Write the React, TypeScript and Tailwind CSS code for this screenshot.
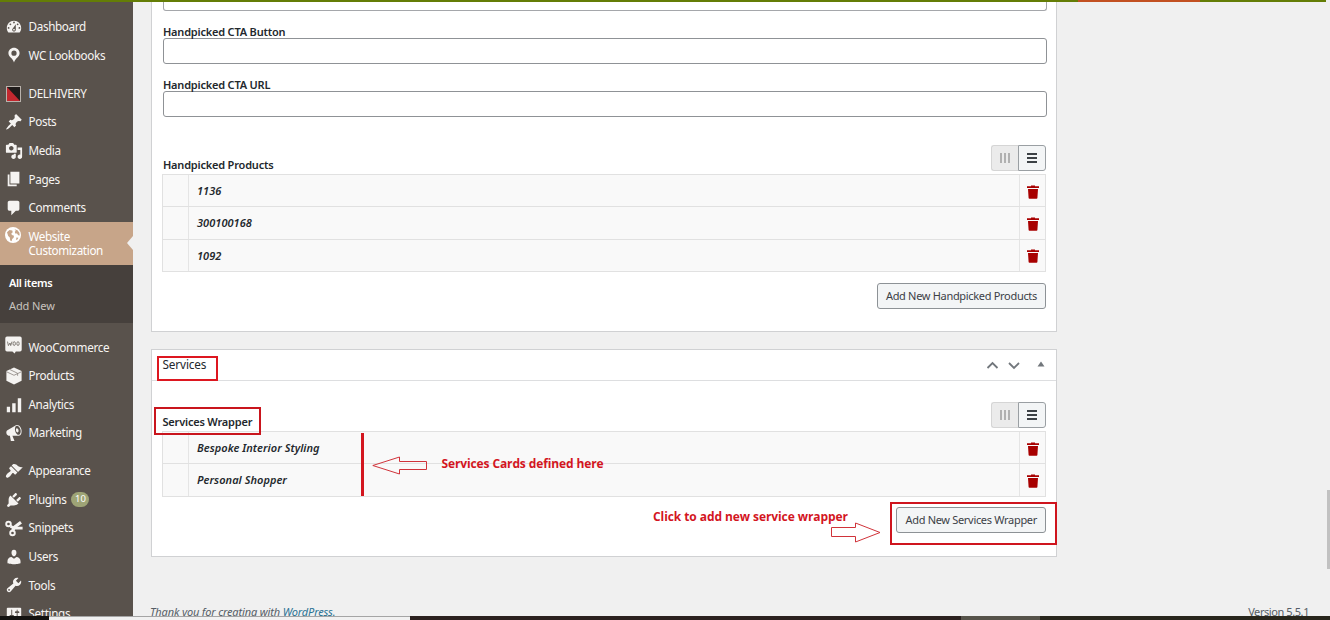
import type { ReactNode } from "react";

const P = {
  dashboard:
    "M3.76 16h12.48c1.1-1.37 1.76-3.11 1.76-5 0-4.42-3.58-8-8-8s-8 3.58-8 8c0 1.89.66 3.63 1.76 5zM10 4c.55 0 1 .45 1 1s-.45 1-1 1-1-.45-1-1 .45-1 1-1zM6 6c.55 0 1 .45 1 1s-.45 1-1 1-1-.45-1-1 .45-1 1-1zm8 0c.55 0 1 .45 1 1s-.45 1-1 1-1-.45-1-1 .45-1 1-1zm-5.37 5.55L12 7v6c0 1.1-.9 2-2 2s-2-.9-2-2c0-.57.24-1.08.63-1.45zM4 10c.55 0 1 .45 1 1s-.45 1-1 1-1-.45-1-1 .45-1 1-1zm12 0c.55 0 1 .45 1 1s-.45 1-1 1-1-.45-1-1 .45-1 1-1zm-5 3c0-.55-.45-1-1-1s-1 .45-1 1 .45 1 1 1 1-.45 1-1z",
  location:
    "M10 2C6.500 2 3.800 4.700 3.800 8c0 2.100 1.300 3.800 2.700 5 1.200 1 2.900 3.300 3.500 5.200.6-1.900 2.300-4.200 3.500-5.200 1.400-1.200 2.700-2.900 2.700-5 0-3.300-2.700-6-6.200-6zm0 3.100a2.900 2.900 0 1 1 0 5.800 2.900 2.900 0 0 1 0-5.800z",
  post: "M10.44 3.02l1.82-1.82 6.36 6.35-1.83 1.82c-1.05-.68-2.48-.57-3.41.36l-.75.75c-.92.93-1.04 2.35-.35 3.41l-1.83 1.82-2.41-2.41-2.8 2.79c-.42.42-3.38 2.71-3.8 2.29s1.86-3.39 2.28-3.81l2.79-2.79L4.1 9.36l1.83-1.82c1.05.69 2.48.57 3.4-.36l.75-.75c.93-.92 1.05-2.35.36-3.41z",
  media:
    "M13 11V4c0-.55-.45-1-1-1h-1.67L9 1H5L3.67 3H2c-.55 0-1 .45-1 1v7c0 .55.45 1 1 1h10c.55 0 1-.45 1-1zM7 4.5c1.38 0 2.5 1.12 2.5 2.5S8.38 9.5 7 9.5 4.5 8.38 4.5 7 5.62 4.5 7 4.5zM14 6h5v10.5c0 1.38-1.12 2.5-2.5 2.5S14 17.88 14 16.5s1.12-2.5 2.5-2.5c.17 0 .34.02.5.05V9h-3V6zm-4 8.05V13h2v3.5c0 1.38-1.12 2.5-2.5 2.5S7 17.88 7 16.5 8.12 14 9.5 14c.17 0 .34.02.5.05z",
  page: "M6 15V2h10v13H6zm-1 1h8v2H3V5h2v11z",
  comments: "M5 2h9c1.1 0 2 .9 2 2v7c0 1.1-.9 2-2 2h-2l-5 5v-5H5c-1.1 0-2-.9-2-2V4c0-1.1.9-2 2-2z",
  analytics: "M2 12h3.6v6H2zM8 8h3.8v10H8zM14.2 2.5H18V18h-3.8z",
  megaphone:
    "M18.15 5.94c.46 1.62.38 3.22-.02 4.48-.42 1.28-1.26 2.18-2.3 2.48-.16.06-.26.06-.4.06-.06.02-.12.02-.18.02-.06.02-.14.02-.22.02h-6.8l2.22 5.5c.02.14-.06.26-.14.34-.08.1-.24.16-.34.16H6.95c-.1 0-.26-.06-.34-.16-.08-.08-.16-.2-.14-.34l-1-5.5H4.25l-.02-.02c-.5.06-1.08-.18-1.54-.62s-.88-1.08-1.06-1.88c-.24-.8-.2-1.56-.02-2.2.18-.62.58-1.08 1.06-1.3l.02-.02 9-5.4c.1-.06.18-.1.24-.16.06-.04.14-.08.24-.12.16-.08.28-.12.5-.18 1.04-.3 2.24.1 3.22.98s1.84 2.24 2.26 3.86zm-2.58 5.98h-.02c.4-.1.74-.34 1.04-.7.58-.7.86-1.76.86-3.04 0-.64-.1-1.3-.28-1.98-.34-1.36-1.02-2.5-1.78-3.24s-1.68-1.1-2.46-.88c-.82.22-1.4.96-1.7 2-.32 1.04-.28 2.36.06 3.72.38 1.36 1 2.5 1.8 3.24.78.74 1.62 1.1 2.48.88zm-2.54-7.08c.22-.04.42-.02.62.04.38.16.76.48 1.02 1s.42 1.2.42 1.78c0 .3-.04.56-.12.8-.18.48-.44.84-.86.94-.34.1-.8-.06-1.14-.4s-.64-.86-.78-1.5c-.18-.62-.12-1.24.02-1.72s.48-.84.82-.94z",
  appearance:
    "M14.48 11.06L7.41 3.99l1.5-1.5c.5-.56 2.3-.47 3.51.32 1.21.8 1.43 1.28 2.91 2.1 1.18.64 2.45 1.26 4.45.85zm-.71.71L6.7 4.7 4.93 6.47c-.39.39-.39 1.02 0 1.41l1.06 1.06c.39.39.39 1.03 0 1.42-.6.6-1.43 1.11-2.21 1.69-.35.26-.7.53-1.01.84C1.43 14.23.4 16.08 1.4 17.07c.99 1 2.84-.03 4.18-1.36.31-.31.58-.66.85-1.02.57-.78 1.08-1.61 1.69-2.21.39-.39 1.02-.39 1.41 0l1.06 1.06c.39.39 1.02.39 1.41 0z",
  plugins:
    "M13.11 4.36L9.87 7.6 8 5.73l3.24-3.24c.35-.34 1.05-.2 1.56.32.52.51.66 1.21.31 1.55zm-8 1.77l.91-1.12 9.01 9.01-1.19.84c-.71.71-2.63 1.16-3.82 1.16H6.14L4.9 17.26c-.59.59-1.54.59-2.12 0-.59-.58-.59-1.53 0-2.12l1.24-1.24v-3.88c0-1.13.4-3.19 1.09-3.89zm7.26 3.97l3.24-3.24c.34-.35 1.04-.21 1.55.31.52.51.66 1.21.31 1.55l-3.24 3.25z",
  users:
    "M10 9.25c-2.27 0-2.73-3.44-2.73-3.44C7 4.02 7.82 2 9.97 2c2.16 0 2.98 2.02 2.71 3.81 0 0-.41 3.44-2.68 3.44zm0 2.57L12.72 10c2.39 0 4.52 2.33 4.52 4.53v2.49s-3.65 1.13-7.24 1.13c-3.65 0-7.24-1.13-7.24-1.13v-2.49c0-2.25 1.94-4.48 4.47-4.48z",
  tools:
    "M16.68 9.77c-1.34 1.34-3.3 1.67-4.95.99l-5.41 6.52c-.99.99-2.59.99-3.58 0s-.99-2.59 0-3.57l6.52-5.42c-.68-1.65-.35-3.61.99-4.95 1.28-1.28 3.12-1.62 4.72-1.06l-2.89 2.89 2.82 2.82 2.86-2.87c.53 1.58.18 3.39-1.08 4.65zM3.81 16.21c.4.39 1.04.39 1.43 0 .4-.4.4-1.04 0-1.43-.39-.4-1.03-.4-1.43 0-.39.39-.39 1.03 0 1.43z",
  settings:
    "M18 16V4c0-.55-.45-1-1-1H3c-.55 0-1 .45-1 1v12c0 .55.45 1 1 1h14c.55 0 1-.45 1-1zM8 11h1c.55 0 1 .45 1 1s-.45 1-1 1H8v1.5c0 .28-.22.5-.5.5s-.5-.22-.5-.5V13H6c-.55 0-1-.45-1-1s.45-1 1-1h1V5.5c0-.28.22-.5.5-.5s.5.22.5.5V11zm5-2h-1c-.55 0-1-.45-1-1s.45-1 1-1h1V5.5c0-.28.22-.5.5-.5s.5.22.5.5V7h1c.55 0 1 .45 1 1s-.45 1-1 1h-1v5.5c0 .28-.22.5-.5.5s-.5-.22-.5-.5V9z",
};

function Glyph({ d }: { d: string }) {
  return (
    <svg viewBox="0 0 20 20" className="size-[18px] fill-[#f5f3f1]" fillRule="evenodd">
      <path d={d} />
    </svg>
  );
}

function Delhivery() {
  return (
    <svg viewBox="0 0 15 16" className="h-4 w-[15px]">
      <rect x="0.5" y="0.5" width="14" height="15" fill="#1f1b1a" stroke="#b9b2ac" />
      <path d="M1 1L14 15H1z" fill="#c2282f" />
    </svg>
  );
}

function Globe() {
  return (
    <svg viewBox="0 0 16 16" className="size-4">
      <circle cx="8" cy="8" r="8" fill="#fff" />
      <path
        d="M2 5.200L4.500 3l2.800.4.4 1.800-1.500 1.600.8 1.200 2 .8-.4 2-1.400 1.200-.6 2.200-1.400-.8-.4-2.800L3.200 9zM9.500 2.200l3 1 1.900 2.600.3 2.600-1.500-.2-1.200-1.600-1.800-.2-.4-1.600 1-1zM11.400 10.400l2 .3-1 1.900-1.300.5z"
        fill="#c7a589"
      />
    </svg>
  );
}

function Woo() {
  return (
    <svg viewBox="0 0 17 18" className="h-[18px] w-[17px] -translate-y-0.5">
      <path d="M2 0.5h13a1.7 1.7 0 0 1 1.7 1.7v11.6a1.7 1.7 0 0 1-1.7 1.7h-4.2l-1.2 2-2.2-2H2A1.7 1.7 0 0 1 .3 13.800V2.200A1.7 1.7 0 0 1 2 .5z" fill="#f5f3f1" />
      <path d="M2.500 5.600l.9 4 1.600-2.600.7 2.600L7 5.600" fill="none" stroke="#6b645e" strokeWidth="0.8" />
      <ellipse cx="9.200" cy="7.600" rx="1.200" ry="1.900" fill="none" stroke="#6b645e" strokeWidth="0.8" />
      <ellipse cx="13" cy="7.600" rx="1.200" ry="1.900" fill="none" stroke="#6b645e" strokeWidth="0.8" />
    </svg>
  );
}

function Products() {
  return (
    <svg viewBox="0 0 18 18" className="size-[18px]">
      <path d="M9 .6l7.600 3.500v9.700L9 17.500l-7.600-3.700V4.100z" fill="#f5f3f1" />
      <path d="M1.400 4.700L9 8.300l7.600-3.600M5 2.600l7.600 3.700v2.500" fill="none" stroke="#8a837d" strokeWidth="0.8" />
    </svg>
  );
}

function Snippets() {
  return (
    <svg viewBox="0 0 18 18" className="size-[18px] fill-none stroke-[#f5f3f1]">
      <circle cx="3.500" cy="5" r="2.300" strokeWidth="1.900" />
      <circle cx="7.500" cy="14" r="2.300" strokeWidth="1.900" />
      <path d="M5.500 7.200L9 9.200H17.600" strokeWidth="2.800" />
      <path d="M7.500 12L9.300 8.300 16 3.300" strokeWidth="3.200" />
    </svg>
  );
}

function Item({ icon, label, badge }: { icon: ReactNode; label: string; badge?: string }) {
  return (
    <li className="flex h-[28.6px] items-center">
      <span className="ml-[3.500px] flex w-5 justify-center">{icon}</span>
      <span className="ml-[5px]">{label}</span>
      {badge && (
        <span className="ml-[5px] flex h-[15px] w-[18px] items-center justify-center rounded-full bg-[#9ea476] text-[9.5px] tracking-normal text-white">
          {badge}
        </span>
      )}
    </li>
  );
}

function Sidebar() {
  return (
    <nav className="h-full w-[133px] shrink-0 overflow-hidden bg-[#59524c] pt-[10.4px] text-[11.7px] tracking-[-0.35px] whitespace-nowrap text-[#f7f5f3]">
      <ul>
        <Item icon={<Glyph d={P.dashboard} />} label="Dashboard" />
        <Item icon={<Glyph d={P.location} />} label="WC Lookbooks" />
      </ul>
      <ul className="mt-[9.8px]">
        <Item icon={<Delhivery />} label="DELHIVERY" />
        <Item icon={<Glyph d={P.post} />} label="Posts" />
        <Item icon={<Glyph d={P.media} />} label="Media" />
        <Item icon={<Glyph d={P.page} />} label="Pages" />
        <Item icon={<Glyph d={P.comments} />} label="Comments" />
      </ul>
      <div className="relative -mt-[0.6px] flex h-[43.200px] bg-[#c7a589] pt-[5px]">
        <span className="ml-[5px] flex w-[19px]">
          <Globe />
        </span>
        <span className="ml-[4.500px] pt-[2px] leading-[14.500px] text-white">
          Website
          <br />
          Customization
        </span>
        <svg viewBox="0 0 6 14" className="absolute top-[14.500px] right-0 h-3.5 w-1.5">
          <path d="M6 0v14L0 7z" fill="#f0f0f0" />
        </svg>
      </div>
      <ul className="h-[58px] bg-[#46403c] pt-1.5 pl-[9px] text-[11px]">
        <li className="h-[23px] leading-[23px] font-semibold text-white">All items</li>
        <li className="h-[23px] leading-[23px] tracking-[-0.1px] text-[#c8c3be]">Add New</li>
      </ul>
      <ul className="mt-[10.200px]">
        <Item icon={<Woo />} label="WooCommerce" />
        <Item icon={<Products />} label="Products" />
        <Item icon={<Glyph d={P.analytics} />} label="Analytics" />
        <Item icon={<Glyph d={P.megaphone} />} label="Marketing" />
      </ul>
      <ul className="mt-[9.200px]">
        <Item icon={<Glyph d={P.appearance} />} label="Appearance" />
        <Item icon={<Glyph d={P.plugins} />} label="Plugins" badge="10" />
        <Item icon={<Snippets />} label="Snippets" />
        <Item icon={<Glyph d={P.users} />} label="Users" />
        <Item icon={<Glyph d={P.tools} />} label="Tools" />
        <Item icon={<Glyph d={P.settings} />} label="Settings" />
      </ul>
    </nav>
  );
}

function ViewToggle() {
  return (
    <div className="flex h-[26px] w-[55px]">
      <span className="flex w-[27px] items-center justify-center gap-[2px] rounded-l-[3px] border border-r-0 border-[#d5d5d5] bg-[#ebebeb]">
        <i className="h-2.5 w-[2px] bg-[#b0b0b0]" />
        <i className="h-2.5 w-[2px] bg-[#b0b0b0]" />
        <i className="h-2.5 w-[2px] bg-[#b0b0b0]" />
      </span>
      <span className="flex flex-1 flex-col items-center justify-center gap-[2px] rounded-r-[3px] border border-[#9a9fa3] bg-[#f3f5f6]">
        <i className="h-[2px] w-2.5 bg-[#3c4145]" />
        <i className="h-[2px] w-2.5 bg-[#3c4145]" />
        <i className="h-[2px] w-2.5 bg-[#3c4145]" />
      </span>
    </div>
  );
}

function Trash() {
  return (
    <svg viewBox="0 0 12 14" className="h-3.5 w-3 fill-[#a80000]">
      <path d="M4 0.500h4V1.200h4v1.700H0V1.200h4zM1 4h10l-.6 9a.8.8 0 0 1-.8.700H2.400a.8.8 0 0 1-.8-.7z" />
    </svg>
  );
}

function Table({ rows }: { rows: string[] }) {
  return (
    <ul className="border-t border-l border-[#e1e1e1] bg-[#f9f9f9] text-[11px] font-semibold tracking-[0.04px] text-[#23282d] italic">
      {rows.map((r) => (
        <li key={r} className="flex h-[32.300px] border-r border-b border-[#e1e1e1]">
          <span className="w-[26px] border-r border-[#e5e5e5]" />
          <span className="flex-1 pl-2 leading-[32px]">{r}</span>
          <span className="flex w-[26px] items-center justify-center border-l border-[#e5e5e5] pt-[2px]">
            <Trash />
          </span>
        </li>
      ))}
    </ul>
  );
}

function Button({ children }: { children: ReactNode }) {
  return (
    <button className="h-[26px] rounded-[3px] border border-[#8d9296] bg-[#f3f5f6] px-2 text-[11px] leading-[24px] tracking-[-0.31px] whitespace-nowrap text-[#3c4146]">
      {children}
    </button>
  );
}

const label = "text-[11px] font-semibold tracking-[-0.2px] text-[#23282d]";

export default function App() {
  return (
    <div className="relative flex h-[620px] w-[1330px] flex-col overflow-hidden bg-[#f0f0f0] font-['Noto_Sans',sans-serif]">
      <header className="flex h-0.5 w-[1326px] shrink-0 bg-[#647d06]">
        <div className="ml-[1078px] w-[122px] bg-[#c25021]" />
      </header>

      <div className="flex h-[614px] shrink-0 overflow-hidden">
        <Sidebar />
        <main className="ml-[18px] flex w-[906px] shrink-0 flex-col">
          <section className="h-[330px] shrink-0 border border-t-0 border-[#d0d1d3] bg-white pr-[9px] pl-[11px]">
            <div className="h-[9px] rounded-b-[3px] border border-t-0 border-[#a5a7ab]" />
            <div className={`mt-[14px] h-[13px] leading-[13px] ${label}`}>Handpicked CTA Button</div>
            <div className="h-[26px] rounded-[3px] border border-[#8f9296]" />
            <div className={`mt-[14px] h-[13px] leading-[13px] ${label}`}>Handpicked CTA URL</div>
            <div className="h-[25.500px] rounded-[3px] border border-[#8f9296]" />
            <div className="mt-[28.500px] mr-px flex items-end justify-between pb-[3px]">
              <span className={`leading-[13px] ${label}`}>Handpicked Products</span>
              <ViewToggle />
            </div>
            <div className="mr-px -ml-px">
              <Table rows={["1136", "300100168", "1092"]} />
            </div>
            <div className="mt-[11px] mr-px flex justify-end">
              <Button>Add New Handpicked Products</Button>
            </div>
          </section>

          <section className="mt-[17px] h-[208px] shrink-0 border border-[#d0d1d3] bg-white">
            <div className="flex h-[31px] items-center border-b border-[#dddee0] pr-[11px] pl-[10.500px]">
              <h2 className="flex-1 text-[11.800px] tracking-[-0.15px] text-[#23282d]">Services</h2>
              <svg viewBox="0 0 60 14" className="h-3.5 w-[60px]">
                <path d="M2.500 10l5-5 5 5M24 5l5 5 5-5" fill="none" stroke="#72777c" strokeWidth="1.800" />
                <path d="M52.500 8.500h7l-3.500-5z" fill="#72777c" />
              </svg>
            </div>
            <div className="pr-[10px] pl-[10.500px]">
              <div className="mt-[21px] flex items-end justify-between pb-[3px]">
                <span className={`leading-[13px] ${label}`}>Services Wrapper</span>
                <ViewToggle />
              </div>
              <div className="-ml-[0.500px]">
                <Table rows={["Bespoke Interior Styling", "Personal Shopper"]} />
              </div>
              <div className="mt-[10px] flex justify-end">
                <Button>Add New Services Wrapper</Button>
              </div>
            </div>
          </section>

          <footer className="mt-[46px] -ml-px flex w-[1159px] shrink-0 justify-between text-[11px] leading-[18px] whitespace-nowrap text-[#555d66]">
            <p className="tracking-[-0.15px] italic">
              Thank you for creating with <a className="text-[#2a7394]">WordPress.</a>
            </p>
            <p className="tracking-[-0.42px]">Version 5.5.1</p>
          </footer>
        </main>
      </div>

      <div className="flex h-1 shrink-0">
        <div className="w-[49px] bg-[#131210]" />
        <div className="w-[361px] border-t border-[#a5a5a5] bg-[#f1f1f1]" />
        <div className="w-[551px] bg-[#2b211f]" />
        <div className="w-[79px] bg-[#56534a]" />
        <div className="flex-1 bg-[#28261c]" />
      </div>

      <div className="absolute top-[490px] right-0 h-[79px] w-[3px] bg-[#c1c1c1]" />

      <div className="absolute top-[356px] left-[157px] h-[25px] w-[61px] border-2 border-[#dd1720]" />
      <div className="absolute top-[407px] left-[154px] h-[28px] w-[107px] border-2 border-[#c9151d]" />
      <div className="absolute top-[502px] left-[890px] h-[43px] w-[167px] border-2 border-[#cf151e]" />
      <div className="absolute top-[433px] left-[361.400px] h-[63px] w-[2.400px] bg-[#d3161f]" />
      <svg viewBox="0 0 56 20" className="absolute top-[456px] left-[372px] h-5 w-14">
        <path d="M.8 9.500L27.500 1v4.500h27v8h-27V18z" fill="none" stroke="#d0333a" />
      </svg>
      <svg viewBox="0 0 52 22" className="absolute top-[522px] left-[830px] h-[22px] w-[52px]">
        <path d="M50 10.500L25.500 1v4.500h-24v9h24V20z" fill="none" stroke="#d0333a" />
      </svg>
      <p className="absolute top-[455px] left-[441.500px] font-['Open_Sans'] text-xs leading-[18px] font-bold tracking-[-0.12px] whitespace-nowrap text-[#d3161f]">
        Services Cards defined here
      </p>
      <p className="absolute top-[508px] left-[653px] font-['Open_Sans'] text-xs leading-[18px] font-bold tracking-[-0.08px] whitespace-nowrap text-[#d3161f]">
        Click to add new service wrapper
      </p>
    </div>
  );
}
